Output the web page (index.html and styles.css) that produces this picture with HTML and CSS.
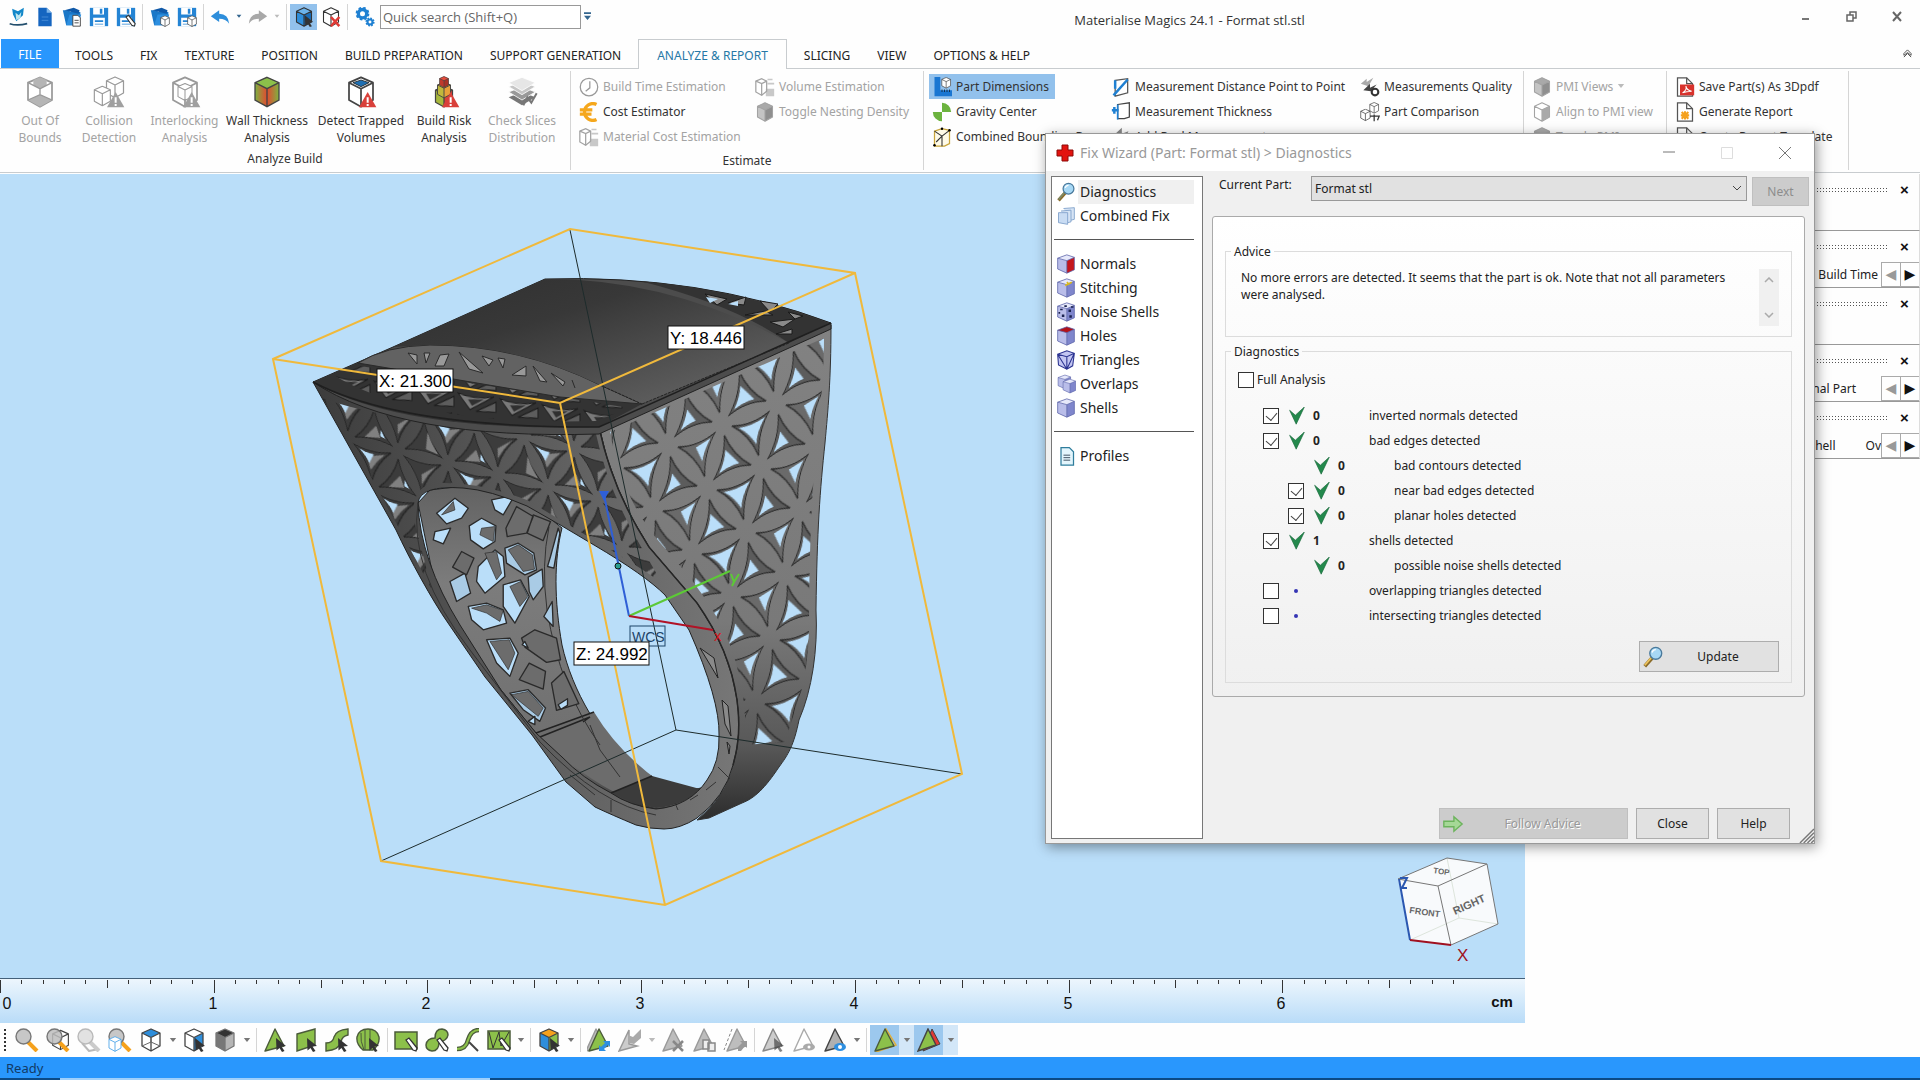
FILE: index.html
```html
<!DOCTYPE html>
<html lang="en">
<head>
    <meta charset="UTF-8">
    <meta name="viewport" content="width=device-width, initial-scale=1.0">
    <title>Materialise Magics 24.1 - Format stl.stl</title>
    <link rel="stylesheet" href="styles.css">
</head>
<body>
    <!-- shared icons -->
    <svg class="defs" width="0" height="0">
        <symbol id="cube" viewBox="0 0 24 24"><path d="M12 1 21 5v13l-9 5-9-5V5z" fill="var(--l,#fff)"/><path d="M12 9.500 21 5v13l-9 5z" fill="var(--r,#fff)"/><path d="M3 5l9-4 9 4-9 4.500z" fill="var(--t,#fff)"/><path d="M12 1 21 5v13l-9 5-9-5V5zM3 5l9 4.500L21 5M12 9.500V23" fill="none" stroke="currentColor" stroke-width="1.300" stroke-linejoin="round"/></symbol>
        <symbol id="cursor" viewBox="0 0 24 24"><path d="M13 10l10 8-4.500.5 3 4.500-2.500 1-2.500-4-3 2.500z" fill="#333"/></symbol>
        <symbol id="warn" viewBox="0 0 24 24"><path d="M17 12l6.500 11.500h-13z" fill="var(--w,#d9403a)"/><path d="M17 16v4M17 21v1.500" stroke="#fff" stroke-width="1.500"/></symbol>
        <symbol id="save" viewBox="0 0 24 24"><path d="M1 1h22v22H1z" fill="#2484d4"/><path d="M5 1h13v8H5zM5 13h14v10H5z" fill="#fff"/><path d="M13 2h3v6h-3zM7 16h10v2H7zM7 20h10v1H7z" fill="#2484d4"/></symbol>
        <symbol id="folder" viewBox="0 0 24 24"><path d="M1 4h7l2 2h12v4l-4 12H5z" fill="#1b78c8"/><path d="M3 4L14 1l7 3-1 4z" fill="#1059a8"/><path d="M5 22L9 9h14l-3 13z" fill="#2d8fe0"/></symbol>
        <symbol id="pen" viewBox="0 0 24 24"><path d="M12 12l3-2 8 10-1 3-3-1z" fill="#fff" stroke="#333" stroke-width="1.300"/></symbol>
        <symbol id="lens" viewBox="0 0 24 24"><path d="M13 14l9 9" stroke="var(--h,#f5a11c)" stroke-width="4" /><circle cx="8.500" cy="8.500" r="7.500" fill="#bdbdbd" fill-opacity=".85" stroke="#777" stroke-width="1.400"/></symbol>
        <symbol id="glass" viewBox="0 0 24 24"><path d="M11 13L3 22" stroke="#8a6a28" stroke-width="4"/><path d="M10 13L3 21" stroke="var(--h,#edc35c)" stroke-width="2"/><circle cx="15" cy="8" r="6.500" fill="#a7d8f5" stroke="#4a7a9c" stroke-width="1.500"/><path d="M11 7q1-3 4-3" stroke="#fff" stroke-width="1.500" fill="none"/></symbol>
        <symbol id="tri" viewBox="0 0 24 24"><path d="M12 1l9 17-19 5z" fill="var(--f,#8cc04a)" stroke="var(--s,#4b5b3a)" stroke-width="1.400" stroke-linejoin="round"/></symbol>
        <symbol id="blocks" viewBox="0 0 24 24"><path d="M1 5l7-3 6 3v12l-6 5-7-4z" fill="#fff" stroke="currentColor" stroke-width="1.500"/><path d="M1 5l7 3 6-3M8 8v14" fill="none" stroke="currentColor" stroke-width="1.500"/><path d="M15 2h6v2h-6zM15 7h8v2h-8zM13 14h10v9H13z" fill="currentColor" opacity=".6"/></symbol>
        <symbol id="page" viewBox="0 0 24 24"><path d="M3 1h11l7 7v15H3z" fill="#fff" stroke="#555" stroke-width="1.500"/><path d="M14 1v7h7" fill="none" stroke="#555" stroke-width="1.500"/></symbol>
        <symbol id="mesh-cube" viewBox="0 0 24 24"><path d="M2 5l11-4 9 3v15l-9 4-11-5z" fill="#cfd2f2"/><path d="M2 5l11 3v15L2 18z" fill="var(--l,#b9bde9)"/><path d="M13 8l9-4v15l-9 4z" fill="var(--r,#7f86cc)"/><path d="M2 5l11-4 9 3-9 4z" fill="var(--t,#e6e8fa)"/><path d="M2 5l11-4 9 3v15l-9 4-11-5zM2 5l11 3 9-4M13 8v15" fill="none" stroke="#5a62a6" stroke-width=".9"/></symbol>
        <symbol id="tick" viewBox="0 0 20 22"><path d="M1 4l7 6L19 0 9 21z" fill="#23894c" stroke="#17693a" stroke-width=".8"/></symbol>
        <symbol id="down" viewBox="0 0 10 6"><path d="M1 0h8L5 5z" fill="currentColor"/></symbol>
    </svg>

    <header id="titlebar">
        <div class="quick">
            <button aria-label="Magics"><svg viewBox="0 0 24 24"><path d="M5 2l7 3 7-4-1 9-8 7-4-8z" fill="#1287c9"/><path d="M9 7l4 3 3-4-1 7-5 3z" fill="#bfe6ee"/><path d="M2 20q9 3 21 0" stroke="#24506e" stroke-width="2" fill="none"/></svg></button>
            <button aria-label="New"><svg viewBox="0 0 24 24"><path d="M4 1h10l6 6v16H4z" fill="#1565c0"/><path d="M14 1v6h6z" fill="#7db5ea"/><path d="M8 12h8M8 16h8" stroke="#4b8fd8"/></svg></button>
            <button aria-label="Open"><svg viewBox="0 0 24 24"><use href="#folder"/><path d="M13 10h6l3 3v10h-9z" fill="#fff" stroke="#333"/><path d="M15 16h5M15 19h5" stroke="#333"/></svg></button>
            <button aria-label="Save"><svg><use href="#save"/></svg></button>
            <button aria-label="Save as"><svg viewBox="0 0 24 24"><use href="#save"/><use href="#pen"/></svg></button>
            <i class="sep"></i>
            <button aria-label="Import part"><svg viewBox="0 0 24 24"><use href="#folder"/><use href="#cube" x="11" y="10" width="14" height="14"/></svg></button>
            <button aria-label="Save part"><svg viewBox="0 0 24 24"><use href="#save"/><use href="#cube" x="11" y="10" width="14" height="14"/></svg></button>
            <i class="sep"></i>
            <button class="wide" aria-label="Undo"><svg viewBox="0 0 24 24"><path d="M1 11l10-7v4q11 0 12 12-4-6-12-6v4z" fill="#2e8edb"/></svg><svg class="caret blue"><use href="#down"/></svg></button>
            <button class="wide" aria-label="Redo"><svg viewBox="0 0 24 24"><path d="M23 11L13 4v4Q2 8 1 20q4-6 12-6v4z" fill="#a8a8a8"/></svg><svg class="caret light"><use href="#down"/></svg></button>
            <i class="sep"></i>
            <button class="on" aria-label="Select part"><svg class="c-blue" viewBox="0 0 24 24"><use href="#cube"/><use href="#cursor"/></svg></button>
            <button aria-label="Unload part"><svg viewBox="0 0 24 24"><use href="#cube"/><path d="M12 12l10 11M22 12L12 23" stroke="#e03a35" stroke-width="3"/></svg></button>
            <i class="sep"></i>
            <button aria-label="Settings"><svg viewBox="0 0 24 24"><circle cx="9" cy="8" r="5" fill="none" stroke="#1f80d2" stroke-width="4"/><circle cx="9" cy="8" r="7" fill="none" stroke="#1f80d2" stroke-width="2.500" stroke-dasharray="3 2.500"/><circle cx="18" cy="18" r="3" fill="none" stroke="#1f80d2" stroke-width="2.500"/><circle cx="18" cy="18" r="4.500" fill="none" stroke="#1f80d2" stroke-width="2" stroke-dasharray="2 1.500"/></svg></button>
            <input type="text" aria-label="Quick search" placeholder="Quick search (Shift+Q)">
            <svg class="overflow" viewBox="0 0 8 10"><path d="M0 0h8v2H0zM0 4h8L4 9z" fill="#33658e"/></svg>
        </div>
        <h1>Materialise Magics 24.1 - Format stl.stl</h1>
        <div class="window-buttons">
            <button aria-label="Minimize"><svg viewBox="0 0 14 14"><path d="M4 8h7v2H4z" fill="#777"/></svg></button>
            <button aria-label="Restore"><svg viewBox="0 0 14 14"><path d="M6 5V2h6v6H9M3 5h6v6H3z" fill="none" stroke="#666" stroke-width="1.500"/></svg></button>
            <button aria-label="Close"><svg viewBox="0 0 14 14"><path d="M3 2l8 9M11 2l-8 9" stroke="#666" stroke-width="2"/></svg></button>
        </div>
    </header>

    <nav id="tabs">
        <a href="#" class="file">FILE</a>
        <a href="#">TOOLS</a>
        <a href="#">FIX</a>
        <a href="#">TEXTURE</a>
        <a href="#">POSITION</a>
        <a href="#">BUILD PREPARATION</a>
        <a href="#">SUPPORT GENERATION</a>
        <a href="#" class="active">ANALYZE &amp; REPORT</a>
        <a href="#">SLICING</a>
        <a href="#">VIEW</a>
        <a href="#">OPTIONS &amp; HELP</a>
        <button aria-label="Collapse ribbon"><svg viewBox="0 0 10 10"><path d="M1 5l4-4 4 4v2L5 4 1 7zM1 9l4-4 4 4" fill="none" stroke="#444"/></svg></button>
    </nav>

    <div id="ribbon">
        <section class="group analyze">
            <div class="big-buttons">
                <button disabled><svg class="c-gray" viewBox="0 0 24 24"><path d="M3 5l9-4 9 4v13l-9 5-9-5z" fill="#fff" stroke="#999" stroke-width="1.300"/><path d="M7 3l5-2 5 2v4l-5 2-5-2zM3 18l9-4 9 4-9 5z" fill="#b5b5b5"/><path d="M3 5l9 4.500L21 5M12 9.500V14M3 18l9-4 9 4" fill="none" stroke="#999"/></svg>Out Of<br>Bounds</button>
                <button disabled><svg viewBox="0 0 24 24"><use href="#cube" x="8" y="0" width="17" height="17"/><use href="#cube" x="-1" y="7" width="16" height="16"/><use href="#warn" class="c-gray"/></svg>Collision<br>Detection</button>
                <button disabled><svg viewBox="0 0 24 24"><use href="#cube"/><use href="#cube" x="5" y="5" width="14" height="14"/><use href="#warn" class="c-gray"/></svg>Interlocking<br>Analysis</button>
                <button><svg viewBox="0 0 24 24"><defs><linearGradient id="heat"><stop offset="0" stop-color="#7db340"/><stop offset=".5" stop-color="#e24a30"/><stop offset="1" stop-color="#7db340"/></linearGradient></defs><path d="M12 1l9 4v13l-9 5-9-5V5z" fill="url(#heat)"/><path d="M3 5l9-4 9 4-9 4.500z" fill="#8cc04a"/><path d="M12 1 21 5v13l-9 5-9-5V5zM3 5l9 4.500L21 5M12 9.500V23" fill="none" stroke="#444"/></svg>Wall Thickness<br>Analysis</button>
                <button><svg viewBox="0 0 24 24"><use href="#cube"/><path d="M6 5l6-2 6 2-6 3z" fill="#1f6fb2" stroke="#222" stroke-width=".6"/><use href="#warn"/></svg>Detect Trapped<br>Volumes</button>
                <button><svg viewBox="0 0 24 24"><use href="#cube" class="c-risk" x="0" y="7" width="24" height="17"/><use href="#cube" class="c-gold" x="4" y="4" width="16" height="13"/><use href="#cube" class="c-red" x="6" y="0" width="12" height="9"/><use href="#warn"/></svg>Build Risk<br>Analysis</button>
                <button disabled><svg viewBox="0 0 24 24"><path d="M2 16l10-4 10 4-10 6z" fill="#777"/><path d="M2 12l10-4 10 4-10 6z" fill="#999" stroke="#fff" stroke-width=".6"/><path d="M2 8l10-4 10 4-10 6z" fill="#c6c6c6" stroke="#fff" stroke-width=".6"/><path d="M2 5l10-4 10 4-10 6z" fill="#e6e6e6" stroke="#fff" stroke-width=".6"/><path d="M13 22l3-6 3 4 4-7" stroke="#777" fill="none" stroke-width="1.500"/></svg>Check Slices<br>Distribution</button>
            </div>
            <h2>Analyze Build</h2>
        </section>
        <section class="group estimate">
            <div class="small-buttons">
                <button disabled><svg viewBox="0 0 24 24"><circle cx="12" cy="12" r="10.500" fill="#fff" stroke="#999" stroke-width="1.500"/><path d="M13 5v8l-5 4" fill="none" stroke="#999" stroke-width="1.500"/></svg>Build Time Estimation</button>
                <button><svg viewBox="0 0 24 24"><path d="M21 3A10 10 0 1 0 21 21M1 9.500h15M1 14.500h14" fill="none" stroke="#f5a71c" stroke-width="4"/></svg>Cost Estimator</button>
                <button disabled><svg><use href="#blocks"/></svg>Material Cost Estimation</button>
                <button disabled><svg><use href="#blocks"/></svg>Volume Estimation</button>
                <button disabled><svg class="c-gray"><use href="#cube"/></svg>Toggle Nesting Density</button>
            </div>
            <h2>Estimate</h2>
        </section>
        <section class="group measure">
            <div class="small-buttons">
                <button class="on"><svg viewBox="0 0 24 24"><path d="M3 0h7v16h14v7H3z" fill="#1976d2"/><path d="M12 15v3M15 15v3M18 15v3M21 15v3" stroke="#123"/><use href="#cube" x="10" y="0" width="14" height="14"/></svg>Part Dimensions</button>
                <button><svg viewBox="0 0 24 24"><path d="M12 1a11 11 0 0 1 11 11H12zM12 23A11 11 0 0 1 1 12h11z" fill="#6cb33f"/></svg>Gravity Center</button>
                <button><svg viewBox="0 0 24 24"><path d="M3 5l9-3 9 2v16l-6 3H3z" fill="#fffbe8" stroke="#c8a43a" stroke-width="1.500"/><path d="M3 5l9 6 9-7M12 11v12M5 18l7-7" stroke="#333" fill="none" stroke-width="1.300"/><circle cx="12" cy="2" r="1.500"/><circle cx="3" cy="22" r="1.500"/><circle cx="21" cy="4" r="1.500"/></svg>Combined Bounding Box</button>
                <button><svg viewBox="0 0 24 24"><path d="M5 4l15-2v17l-15 4z" fill="#fff" stroke="#555" stroke-width="1.500"/><path d="M3 22L20 3M5 4v10" stroke="#1f80d2" stroke-width="3"/></svg>Measurement Distance Point to Point</button>
                <button><svg viewBox="0 0 24 24"><path d="M8 3l14-2v17l-6 2H8z" fill="#fff" stroke="#444" stroke-width="1.500"/><path d="M4 6v8M1 10h8" stroke="#1f80d2" stroke-width="3"/><path d="M8 3v18" stroke="#1f80d2" stroke-width="2"/></svg>Measurement Thickness</button>
                <button><svg viewBox="0 0 24 24"><path d="M2 11L13 1v7l8-3-9 17z" fill="#888"/></svg>Add Real Measurement</button>
                <button><svg viewBox="0 0 24 24"><path d="M1 8l7-6v4l8-5-6 10z" fill="#aaa"/><path d="M4 16l8-8v5l8-4-7 8z" fill="#444"/><circle cx="18" cy="18" r="4" fill="#fff" stroke="#333" stroke-width="2.500"/></svg>Measurements Quality</button>
                <button><svg viewBox="0 0 24 24"><use href="#cube" x="10" y="0" width="14" height="14"/><use href="#cube" x="-1" y="8" width="15" height="15"/><path d="M17 15v8M12 17h11l-2 5" stroke="#333" stroke-width="1.500" fill="none"/></svg>Part Comparison</button>
            </div>
        </section>
        <section class="group pmi">
            <div class="small-buttons">
                <button disabled><svg class="c-gray"><use href="#cube"/></svg>PMI Views <svg class="caret light"><use href="#down"/></svg></button>
                <button disabled><svg viewBox="0 0 24 24"><use href="#cube"/><path d="M12 9v14l9-5V5z" fill="#aaa"/></svg>Align to PMI view</button>
                <button disabled><svg class="c-gray"><use href="#cube"/></svg>Toggle PMI</button>
            </div>
        </section>
        <section class="group report">
            <div class="small-buttons">
                <button><svg viewBox="0 0 24 24"><use href="#page"/><path d="M6 9h17v13H6z" fill="#d8322c"/><path d="M9 19q6-4 4-8 1 5 7 6-6 0-11 2" fill="none" stroke="#fff" stroke-width="1.300"/></svg>Save Part(s) As 3Dpdf</button>
                <button><svg viewBox="0 0 24 24"><use href="#page"/><path d="M12 11v10M7 16h10M8 12l8 8M16 12l-8 8" stroke="#f5a11c" stroke-width="2.500"/></svg>Generate Report</button>
                <button><svg><use href="#page"/></svg>Create Report Template</button>
            </div>
        </section>
    </div>

    <main id="workspace">
        <div id="viewport">
            <svg id="scene" viewBox="0 174 1525 804" preserveAspectRatio="xMinYMin slice">
                <defs>
                    <linearGradient id="top-shade" x1="0" y1="0" x2="1" y2="1"><stop offset="0" stop-color="#2f2f2f"/><stop offset=".35" stop-color="#383838"/><stop offset="1" stop-color="#6a6a6a"/></linearGradient>
                    <linearGradient id="front-shade"><stop offset="0" stop-color="#3c3c3c"/><stop offset=".4" stop-color="#555"/><stop offset="1" stop-color="#777"/></linearGradient>
                    <linearGradient id="side-shade" x1="0" y1="0" x2="0" y2="1"><stop offset="0" stop-color="#828282"/><stop offset=".6" stop-color="#797979"/><stop offset=".85" stop-color="#585858"/><stop offset="1" stop-color="#2c2c2c"/></linearGradient>
                    <linearGradient id="inner-shade" x1="0" y1="0" x2="0" y2="1"><stop offset="0" stop-color="#626262"/><stop offset=".3" stop-color="#7c7c7c"/><stop offset=".85" stop-color="#6e6e6e"/><stop offset="1" stop-color="#303030"/></linearGradient>
                    <!-- one tile holds four curved holes between six-petal flowers -->
                    <pattern id="petals" width="200" height="100" patternUnits="userSpaceOnUse" patternTransform="matrix(.54 -.21 -.15 .64 707 488)">
                        <g stroke="#2b2b2b" stroke-width="1.800" fill="#5c5c5c">
                            <path d="M21 10Q61 23 90 10 77 39 90 79 61 37 21 10z"/>
                            <path d="M10 21Q23 61 10 90 39 77 79 90 37 61 10 21z"/>
                            <path d="M121 10Q161 23 190 10 177 39 190 79 161 37 121 10z" fill="#6a6a6a"/>
                            <path d="M110 21Q123 61 110 90 139 77 179 90 137 61 110 21z"/>
                        </g>
                        <g fill="#badef9">
                            <path d="M36 18Q62 24 84 17 74 38 80 58 60 34 36 18z"/>
                            <path d="M19 47Q24 64 18 83 36 76 54 79 34 60 19 47z"/>
                            <path d="M158 23l25-6q-8 20-5 34z"/>
                            <path d="M122 52q2 14-3 31 16-7 26-6z"/>
                        </g>
                    </pattern>
                    <pattern id="front-petals" width="200" height="100" patternUnits="userSpaceOnUse" patternTransform="matrix(-.5 -.12 .24 .5 448 463)">
                        <g stroke="#222" stroke-width="1.800" fill="#3c3c3c">
                            <path d="M18 8Q61 21 92 8 79 39 92 82 61 38 18 8z"/>
                            <path d="M8 18Q21 61 8 92 39 79 82 92 38 61 8 18z"/>
                            <path d="M118 8Q161 21 192 8 179 39 192 82 161 38 118 8z"/>
                            <path d="M108 18Q121 61 108 92 139 79 182 92 138 61 108 18z"/>
                        </g>
                        <path d="M30 14l42 26 10 22-24-24zM13 42q4 28 0 44l22-5zM134 16l42 13 6 28-24-22zM122 55l4 25 34 6z" fill="#808080"/>
                        <path d="M158 20q14 2 26-5-8 18-6 28zM116 62l0 18 8-4z" fill="#badef9"/>
                    </pattern>
                    <pattern id="slots" width="42" height="22" patternUnits="userSpaceOnUse" patternTransform="matrix(1 .14 0 1 330 372)">
                        <path d="M2 3Q20 8 38 2L14 18z" fill="#7a7a7a" stroke="#1c1c1c"/><path d="M12 8l16-2-12 8z" fill="#303030"/><path d="M20 19l20-12v10z" fill="#5d5d5d" stroke="#1c1c1c"/>
                    </pattern>
                </defs>

                <!-- ring: inside wall -->
                <path d="M418 503L430 490 463 486 527 500 562 528C554 560 554 600 562 645 572 690 600 740 640 772 665 788 690 792 705 787L690 805 656 812 600 795 536 733 501 690 438 600z" fill="url(#inner-shade)" stroke="#222"/>
                <path d="M536 733L594 712Q618 752 660 782L700 789Q688 806 656 808 600 795 536 733z" fill="#6c6c6c"/>
                <path d="M656 808Q630 803 611 793L652 776 700 789Q684 806 656 808z" fill="#3b3b3b"/>
                <path d="M536 733L594 712M540 737L590 717 583 722M611 793L652 776" fill="none" stroke="#222" stroke-width="1.500"/>
                <path d="M590 725l10 25 20 27M549 527Q541 565 547 610 560 690 600 745" fill="none" stroke="#333"/>
                <g transform="translate(400 400) scale(.333)" fill="#badef9" stroke="#2a2a2a" stroke-width="4" stroke-linejoin="round">
                    <path d="M110 340L165 295 205 325 185 355 140 372zM208 378L245 355 288 378 285 425 250 447 212 420zM275 300L345 285 310 345 285 330zM105 395L152 385 130 432 100 420zM235 500L285 450 310 470 315 530 255 580 230 545zM310 555L362 540 388 590 345 670 310 620zM205 620L260 610 310 630 320 670 250 690 215 660zM260 720L330 715 355 760 330 830 290 790z"/>
                    <path d="M315 445L355 430 402 460 410 510 375 525 320 490zM385 532L427 508 430 560 400 600 388 575zM330 880L385 870 437 925 420 965 370 930zM452 470L475 385 480 400 462 505 443 500zM150 545L195 520 212 580 170 605zM432 650L457 605 460 680z" fill="#a9cbe5"/>
                    <g fill="#6c6c6c">
                        <path d="M318 385L350 320 400 350 380 400 322 410zM400 345L452 365 430 422 382 400zM185 455L222 475 200 525 158 502zM365 715L405 690 470 715 482 780 440 788 375 742zM388 790L437 815 430 868 358 840zM455 850L492 815 537 912 470 932z"/>
                        <path d="M325 450L355 435 398 465 404 508 370 515zM245 385L285 380 280 425 240 405zM255 460L290 455 305 520 290 540zM330 560L362 545 384 590 360 620zM215 625L260 615 310 632 300 665 260 640zM270 725L328 720 345 760 325 810zM125 345L160 305 165 330zM335 885L385 875 430 925 415 950z" stroke-width="2"/>
                    </g>
                    <path d="M475 915l28-18 0 20-20 12zM385 965l20-15 0 25zM375 725l10 20-18-10z"/>
                </g>

                <!-- ring: right side -->
                <path id="side" d="M599 427L831 325C831 380 828 410 825 443 820 490 817 530 816 610 818 650 812 690 799 720 794 745 788 755 779 767 765 788 755 798 742 803L709 818 697 820Q725 797 733 765 742 735 737 700 730 650 697 603L649 547Q612 490 599 427z" fill="url(#side-shade)" stroke="#333"/>
                <path d="M610 432L824 338C824 380 820 410 817 443 812 490 810 530 809 610 810 650 805 690 792 720L785 742 745 745Q748 690 728 640 712 600 662 545 622 500 610 432z" fill="url(#petals)"/>

                <!-- ring: front band -->
                <path d="M313 382Q380 425 599 427 612 490 649 547L697 603Q730 650 737 700 742 735 733 765 725 797 697 818 680 829 664 829 650 829 636 825 612 815 595 807L566 782 532 735 485 677 448 623C432 600 410 560 396 530L355 457zM418 503Q420 560 460 625L501 690 536 733 562 757Q582 778 611 793 630 806 656 809 690 806 707 780 720 762 719 735 720 700 689 630L665 595Q645 575 594 545L562 526 527 506Q490 490 463 488 420 485 418 503z" fill="url(#front-shade)" fill-rule="evenodd" stroke="#222"/>
                <path d="M322 398Q400 427 596 434 608 490 640 545L662 583Q640 567 594 540L527 500Q480 482 440 483 410 483 414 520L432 590 400 530 360 457z" fill="url(#front-petals)"/>
                <path d="M599 427Q612 490 649 547L697 603Q730 650 737 700 742 735 733 765" fill="none" stroke="#262626" stroke-width="1.500"/>
                <path d="M418 503Q408 570 470 650L540 742Q600 805 656 815" fill="none" stroke="#333"/>
                <g fill="#8a8a8a" stroke="#222">
                    <path d="M700 648l14 10 4 20zM722 700l6 6 3 30-6-12zM727 742l3 4-1 8z"/>
                </g>
                <path d="M611 800v12M675 803l3 7M718 767l12 12M570 775l25 20M690 800l8-5M706 790l10-8" stroke="#333"/>

                <!-- ring: top -->
                <path d="M313 382L393 347 545 279Q700 274 831 323V329L599 434Q400 440 313 382z" fill="#4c4c4c" stroke="#222"/>
                <path d="M313 382L360 362 642 404 599 427Q400 432 313 382z" fill="#333"/>
                <path d="M335 376L360 366 630 408 596 421Q420 426 335 376z" fill="url(#slots)"/>
                <path d="M358 363Q385 346 430 345 520 345 600 385L642 404 560 397z" fill="#626262" stroke="#2a2a2a"/>
                <path d="M408 353l9 11v-9zM424 353l6 0-4 10zM440 355l9-1-5 12-9 0zM459 352l10 17 14 4zM482 356l7 10 4-6zM498 358l5 10 2-9zM512 375l14-9 0 10zM533 366l7 15 7 1zM551 373l12 13 2-4zM572 380l3 8" fill="#999" stroke="#2a2a2a"/>
                <path d="M393 347L545 279Q670 278 789 343L642 404 600 385Q520 345 430 345z" fill="url(#top-shade)"/>
                <path d="M640 281Q740 290 829 323L789 343Q735 305 640 281z" fill="#333"/>
                <path d="M705 294l22 5-10 6zM728 303l18-6-2 8zM745 315l20-4 8 4zM760 301l18 3-8 8zM770 322l25-3-12 8zM788 312l15 4-8 3zM776 334l16 0 0-5z" fill="#8a8a8a" stroke="#1b1b1b"/>
                <path d="M706 297l12 2-8 4zM728 304l10-3 0 5z" fill="#badef9"/>
                <path d="M313 382Q400 428 599 427L831 323" fill="none" stroke="#1f1f1f" stroke-width="1.500"/>
                <path d="M600 385l42 19M642 404l147-61" stroke="#222" stroke-dasharray="3 1"/>

                <!-- bounding box -->
                <path d="M570 230L676 730 381 861M676 730L962 774" fill="none" stroke="#1d2b2b"/>
                <path d="M273 359L570 229 855 273 962 774 665 905 381 861zM273 359L560 403 855 273M560 403L665 905" fill="none" stroke="#f0b93c" stroke-width="2"/>
                <path d="M604 495L629 616" stroke="#2f5fd6" stroke-width="2"/><path d="M599 491h10l-5 10z" fill="#2f5fd6"/>
                <circle cx="618" cy="566" r="3" fill="#2a9d8f" stroke="#111"/>
                <path d="M629 616L730 571M731 574l3 8 5-8M734 582l-2 4" fill="none" stroke="#5cc936" stroke-width="2"/>
                <path d="M629 616L713 630" stroke="#b11226" stroke-width="2"/>
                <text x="714" y="641" class="axis">x</text>
                <text x="632" y="642" class="wcs">WCS</text><rect x="630" y="626" width="35" height="20" fill="none" stroke="#1d4468"/>
                <g class="dims">
                    <rect x="377" y="369" width="76" height="23"/><text x="379" y="387">X: 21.300</text>
                    <rect x="668" y="326" width="76" height="23"/><text x="670" y="344">Y: 18.446</text>
                    <rect x="574" y="642" width="75" height="23"/><text x="576" y="660">Z: 24.992</text>
                </g>

                <!-- view cube -->
                <path d="M1398 879L1447 858 1487 864 1498 924 1451 945 1410 940z" fill="#f8fafc"/>
                <path d="M1410 940L1459 918 1498 924M1459 918L1447 858" fill="none" stroke="#dde5dc"/>
                <path d="M1398 879L1447 858 1487 864 1498 924 1451 945M1398 879L1438 886 1487 864M1438 886L1451 945" fill="none" stroke="#777"/>
                <path d="M1399 879L1410 940M1400 878h7l-5 10h5" fill="none" stroke="#2b57b0" stroke-width="2"/>
                <path d="M1410 940L1451 945" stroke="#a01020" stroke-width="2"/>
                <text x="1409" y="913" class="face" transform="rotate(8 1409 913)">FRONT</text>
                <text x="1455" y="915" class="face big" transform="rotate(-24 1455 915)">RIGHT</text>
                <text x="1433" y="873" class="face top" transform="rotate(8 1433 873)">TOP</text>
                <text x="1457" y="961" class="axis-x">X</text>
            </svg>
            <svg id="ruler" height="45"></svg>
        </div>
        <aside id="panes">
            <section><header><i></i><button aria-label="Close pane">×</button></header></section>
            <section><header><i></i><button aria-label="Close pane">×</button></header>
                <div class="pane-tabs"><span>Build Time</span><button aria-label="Previous tab">◀</button><button aria-label="Next tab">▶</button></div></section>
            <section><header><i></i><button aria-label="Close pane">×</button></header></section>
            <section><header><i></i><button aria-label="Close pane">×</button></header>
                <div class="pane-tabs"><span class="short">Original Part</span><button aria-label="Previous tab">◀</button><button aria-label="Next tab">▶</button></div></section>
            <section><header><i></i><button aria-label="Close pane">×</button></header>
                <div class="pane-tabs"><span class="cut">Shell</span><span class="cut-next">Ov</span><button aria-label="Previous tab">◀</button><button aria-label="Next tab">▶</button></div></section>
        </aside>
    </main>

    <div id="toolbar">
        <i class="grip"></i>
        <button aria-label="Zoom"><svg><use href="#lens"/></svg></button>
        <button aria-label="Zoom part"><svg viewBox="0 0 24 24"><use href="#cube" x="4" y="0" width="21" height="24"/><use href="#lens"/></svg></button>
        <button aria-label="Unzoom"><svg class="faded" viewBox="0 0 24 24"><path d="M5 15l7 8 10-2" fill="none" stroke="#777" stroke-width="2"/><use href="#lens"/></svg></button>
        <button aria-label="Zoom all"><svg viewBox="0 0 24 24"><use href="#lens"/><use href="#cube" class="c-line" x="-1" y="8" width="16" height="16"/></svg></button>
        <button aria-label="Views"><svg class="c-top" viewBox="0 0 24 24"><use href="#cube"/><path d="M12 9v5L3 18M12 14l9 4" fill="none" stroke="#666"/></svg></button>
        <svg class="caret"><use href="#down"/></svg>
        <button aria-label="Select side"><svg class="c-right" viewBox="0 0 24 24"><use href="#cube"/><use href="#cursor"/></svg></button>
        <button aria-label="Shading"><svg class="c-dark"><use href="#cube"/></svg></button>
        <svg class="caret"><use href="#down"/></svg>
        <i class="sep"></i>
        <button aria-label="Mark triangle"><svg viewBox="0 0 24 24"><use href="#tri"/><use href="#cursor"/></svg></button>
        <button aria-label="Mark plane"><svg viewBox="0 0 24 24"><path d="M3 6l18-5v16L3 23z" fill="#8cc04a" stroke="#4b5b3a" stroke-width="1.400"/><use href="#cursor"/></svg></button>
        <button aria-label="Mark surface"><svg viewBox="0 0 24 24"><path d="M1 23V15q7 0 8-6 2-7 14-8v6q-6 1-7 7-2 8-15 9z" fill="#8cc04a" stroke="#4b5b3a" stroke-width="1.400"/><use href="#cursor"/></svg></button>
        <button aria-label="Mark shell"><svg viewBox="0 0 24 24"><path d="M7 22Q0 16 1 9 3 1 12 1t11 8q1 7-6 13z" fill="#8cc04a" stroke="#4b5b3a" stroke-width="1.400"/><path d="M9 2v20M14 1v21M5 5q-1 8 3 17" fill="none" stroke="#4b5b3a"/><use href="#cursor"/></svg></button>
        <i class="sep"></i>
        <button aria-label="Rectangle marking"><svg viewBox="0 0 24 24"><path d="M1 4h22v17H1z" fill="#8cc04a" stroke="#4b5b3a" stroke-width="1.500"/><use href="#pen"/></svg></button>
        <button aria-label="Free form marking"><svg viewBox="0 0 24 24"><path d="M10 10q0-9 7-9 6 1 6 6-1 6-9 7 0 9-7 9-6-1-6-6 1-7 9-7z" fill="#8cc04a" stroke="#4b5b3a" stroke-width="1.500"/><use href="#pen"/></svg></button>
        <button aria-label="Brush marking"><svg viewBox="0 0 24 24"><path d="M1 21q9 0 11-9 3-10 11-10" fill="none" stroke="#4b5b3a" stroke-width="4.500"/><path d="M1 21q9 0 11-9 3-10 11-10" fill="none" stroke="#8cc04a" stroke-width="2"/><path d="M13 14l9 9" stroke="#444" stroke-width="2"/></svg></button>
        <button aria-label="Window marking"><svg viewBox="0 0 24 24"><path d="M1 3h22v18H1z" fill="#8cc04a" stroke="#4b5b3a" stroke-width="1.500"/><path d="M2 4l4 16 6-16 2 14 8-14" fill="none" stroke="#333"/><use href="#pen"/></svg></button>
        <svg class="caret"><use href="#down"/></svg>
        <i class="sep"></i>
        <button aria-label="Colour cube"><svg class="c-multi" viewBox="0 0 24 24"><use href="#cube"/><use href="#cursor"/></svg></button>
        <svg class="caret"><use href="#down"/></svg>
        <i class="sep"></i>
        <button aria-label="Invert marking"><svg viewBox="0 0 24 24"><use href="#tri" class="t-gray" x="-3"/><use href="#tri"/><path d="M12 23v-6l2 2 4-4-2-2h7v6l-2-2-4 4 2 2z" fill="#2f8fe0"/></svg></button>
        <button disabled aria-label="Connect"><svg viewBox="0 0 24 24"><path d="M1 23L11 2v14l8 2z" fill="#ccc" stroke="#999" stroke-width="1.500"/><path d="M10 7l5 2 8-8v9l-7 6-6-1z" fill="#aaa"/></svg></button>
        <svg class="caret light"><use href="#down"/></svg>
        <button disabled aria-label="Delete marked"><svg viewBox="0 0 24 24"><use href="#tri" class="t-gray"/><path d="M12 13l10 10M22 13L12 23" stroke="#888" stroke-width="2.500"/></svg></button>
        <button disabled aria-label="Copy marked"><svg viewBox="0 0 24 24"><use href="#tri" class="t-gray"/><path d="M11 12h6v9h-6zM16 15h7v8h-7z" fill="#eee" stroke="#888" stroke-width="1.500"/></svg></button>
        <button disabled aria-label="Separate marked"><svg viewBox="0 0 24 24"><use href="#tri" class="t-gray" x="2"/><path d="M9 1L1 22" stroke="#888" stroke-dasharray="3 2"/><path d="M15 23v-4l4-4-2-2h7v7l-2-2-4 5z" fill="#999"/></svg></button>
        <i class="sep"></i>
        <button disabled aria-label="Hide marked"><svg viewBox="0 0 24 24"><use href="#tri" class="t-light"/><use href="#cursor" opacity=".6"/></svg></button>
        <button disabled aria-label="Show hidden"><svg viewBox="0 0 24 24"><use href="#tri" class="t-white"/><ellipse cx="17" cy="19" rx="6" ry="3.500" fill="#aaa"/><circle cx="17" cy="19" r="1.500" fill="#fff"/></svg></button>
        <button aria-label="View triangles"><svg viewBox="0 0 24 24"><use href="#tri" class="t-dark"/><ellipse cx="17" cy="19" rx="6" ry="4" fill="#2f8fe0"/><circle cx="17" cy="19" r="2" fill="#fff"/></svg></button>
        <svg class="caret"><use href="#down"/></svg>
        <i class="sep"></i>
        <button class="on" aria-label="Mark flat"><svg viewBox="0 0 24 24"><path d="M13 1l10 16-20 7z" fill="none" stroke="#e0b040" stroke-width="1.500"/><use href="#tri"/></svg></button>
        <span class="drop"><svg class="caret"><use href="#down"/></svg></span>
        <button class="on" aria-label="Mark double"><svg viewBox="0 0 24 24"><path d="M15 1l8 15-17 7z" fill="#e03a35" stroke="#444"/><path d="M11 1l8 16-18 6z" fill="#8cc04a" stroke="#444" stroke-width="1.500"/></svg></button>
        <span class="drop"><svg class="caret"><use href="#down"/></svg></span>
    </div>

    <footer id="status">Ready</footer>

    <div id="wizard" role="dialog" aria-labelledby="wizard-title">
        <header>
            <svg viewBox="0 0 18 18"><path d="M6 1h6v5h5v6h-5v5H6v-5H1V6h5z" fill="#e3130f" stroke="#8d0b08"/></svg>
            <h2 id="wizard-title">Fix Wizard (Part: Format stl) &gt; Diagnostics</h2>
            <button aria-label="Minimize"><svg viewBox="0 0 14 14"><path d="M1 6h12" stroke="#777"/></svg></button>
            <button aria-label="Maximize" disabled><svg viewBox="0 0 14 14"><path d="M1.500 1.500h11v11h-11z" fill="none" stroke="#ddd"/></svg></button>
            <button aria-label="Close"><svg viewBox="0 0 14 14"><path d="M1 1l12 12M13 1L1 13" stroke="#777"/></svg></button>
        </header>
        <div class="wizard-body">
            <nav>
                <a href="#" class="active"><svg class="olive"><use href="#glass"/></svg><span>Diagnostics</span></a>
                <a href="#"><svg viewBox="0 0 24 24"><path d="M9 3l13-1v14l-4 1" fill="#d6e4f5" stroke="#7a9cc8"/><path d="M6 6l12-1v14l-4 1" fill="#d6e4f5" stroke="#7a9cc8"/><path d="M3 8l11 0v14l-11-2z" fill="#c9dcf3" stroke="#7a9cc8"/></svg><span>Combined Fix</span></a>
                <hr>
                <a href="#"><svg class="m-red"><use href="#mesh-cube"/></svg><span>Normals</span></a>
                <a href="#"><svg viewBox="0 0 24 24"><use href="#mesh-cube"/><path d="M11 9l8-4M13 5l3 3" stroke="#d8b820" stroke-width="2"/></svg><span>Stitching</span></a>
                <a href="#"><svg viewBox="0 0 24 24"><use href="#mesh-cube"/><path d="M5 8h3v2H5zM10 4h3v2h-3zM15 9h3v3h-3zM7 15h3v3H7zM16 16h3v3h-3zM18 5h3v2h-3zM3 12h2v2H3z" fill="#1b2350"/></svg><span>Noise Shells</span></a>
                <a href="#"><svg class="m-holes"><use href="#mesh-cube"/></svg><span>Holes</span></a>
                <a href="#"><svg viewBox="0 0 24 24"><path d="M2 5l11-4 9 3-2 15-7 4L3 18z" fill="#c3c6f2"/><path d="M2 5l11-4 9 3-2 15-7 4L3 18zM2 5l11 3 9-4M2 5l11 18L22 4M13 8v15" fill="none" stroke="#2b3390" stroke-width="1.300"/></svg><span>Triangles</span></a>
                <a href="#"><svg viewBox="0 0 24 24"><use href="#mesh-cube" x="1" y="0" width="18" height="19"/><use href="#mesh-cube" x="7" y="5" width="18" height="19"/></svg><span>Overlaps</span></a>
                <a href="#"><svg><use href="#mesh-cube"/></svg><span>Shells</span></a>
                <hr>
                <a href="#"><svg viewBox="0 0 24 24"><path d="M6 2h10l5 5v16H6z" fill="#e3f5fc" stroke="#2f7d9c" stroke-width="1.500"/><path d="M9 11h8M9 14h8M9 17h8" stroke="#234"/></svg><span>Profiles</span></a>
            </nav>
            <div class="wizard-main">
                <div class="part-row">
                    <label for="current-part">Current Part:</label>
                    <div class="select">
                        <select id="current-part"><option>Format stl</option></select>
                        <svg viewBox="0 0 10 6"><path d="M1 1l4 4 4-4" fill="none" stroke="#444"/></svg>
                    </div>
                    <button class="win" disabled>Next</button>
                </div>
                <div class="sheet">
                    <fieldset class="advice">
                        <legend>Advice</legend>
                        <p>No more errors are detected. It seems that the part is ok. Note that not all parameters were analysed.</p>
                        <div class="scroll"><svg viewBox="0 0 10 6"><path d="M1 5l4-4 4 4" fill="none" stroke="#aaa" stroke-width="1.500"/></svg><svg viewBox="0 0 10 6"><path d="M1 1l4 4 4-4" fill="none" stroke="#aaa" stroke-width="1.500"/></svg></div>
                    </fieldset>
                    <fieldset class="diagnostics">
                        <legend>Diagnostics</legend>
                        <label class="full"><input type="checkbox">Full Analysis</label>
                        <ul>
                            <li><input type="checkbox" id="d1" checked><svg><use href="#tick"/></svg><b>0</b><label for="d1">inverted normals detected</label></li>
                            <li><input type="checkbox" id="d2" checked><svg><use href="#tick"/></svg><b>0</b><label for="d2">bad edges detected</label></li>
                            <li class="sub"><span></span><svg><use href="#tick"/></svg><b>0</b><span>bad contours detected</span></li>
                            <li class="sub"><input type="checkbox" id="d3" checked><svg><use href="#tick"/></svg><b>0</b><label for="d3">near bad edges detected</label></li>
                            <li class="sub"><input type="checkbox" id="d4" checked><svg><use href="#tick"/></svg><b>0</b><label for="d4">planar holes detected</label></li>
                            <li><input type="checkbox" id="d5" checked><svg><use href="#tick"/></svg><b>1</b><label for="d5">shells detected</label></li>
                            <li class="sub"><span></span><svg><use href="#tick"/></svg><b>0</b><span>possible noise shells detected</span></li>
                            <li><input type="checkbox" id="d6"><i class="dot"></i><b></b><label for="d6">overlapping triangles detected</label></li>
                            <li><input type="checkbox" id="d7"><i class="dot"></i><b></b><label for="d7">intersecting triangles detected</label></li>
                        </ul>
                        <button class="win update"><svg><use href="#glass"/></svg><span>Update</span></button>
                    </fieldset>
                </div>
                <div class="actions">
                    <button class="win follow" disabled><svg viewBox="0 0 24 24"><path d="M2 9h11V4l9 8-9 8v-5H2z" fill="#a5d896" stroke="#6cb35c" stroke-width="1.500"/></svg><span>Follow Advice</span></button>
                    <button class="win">Close</button>
                    <button class="win">Help</button>
                </div>
            </div>
        </div>
        <svg class="resize" viewBox="0 0 16 16"><path d="M1 16L16 1M5 16L16 5M9 16l7-7M13 16l3-3" stroke="#777" stroke-width="1.500"/></svg>
    </div>

    <script>
        // ruler: one centimetre is a major tick, ten minor ticks in between
        const ruler = document.getElementById("ruler")
        const cm = 213.7
        let marks = ""
        for (let i = 0; i <= 68; i++) {
            const x = Math.round(i * cm / 10)
            const h = i % 10 === 0 ? 13 : (i % 5 === 0 ? 8 : 4)
            marks += `<path d="M${x + 0.5} 1v${h}"/>`
            if (i % 10 === 0) marks += `<text x="${Math.max(x - 1, 7)}" y="30">${i / 10}</text>`
        }
        ruler.innerHTML = marks + `<text x="1502" y="28" class="unit">cm</text>`
    </script>
</body>
</html>
```
FILE: styles.css
```css
:root {
    --blue: #2997fd;
    --sky: #badef9;
    --selected: #92c1ec;
    --line: #c8cccf;
    --ui-font: 'Noto Sans', 'Open Sans', sans-serif;
}

* {
    box-sizing: border-box;
}

body {
    margin: 0;
    height: 100vh;
    display: flex;
    flex-direction: column;
    overflow: hidden;
    background: #fefefe;
    color: #333;
    font: 12px/17px var(--ui-font);
}

h1, h2, p, ul, fieldset {
    margin: 0;
    padding: 0;
    font-size: inherit;
    font-weight: normal;
}

button {
    padding: 0;
    border: 0;
    background: none;
    color: inherit;
    font: inherit;
}
button:disabled {
    color: #a3a3a3;
}
svg {
    flex: none;
}
.defs {
    position: absolute;
}
.sep {
    width: 1px;
    background: #d5d5d5;
}
.caret {
    width: 8px;
    height: 5px;
    color: #777;
}
.caret.blue { color: #33658e; }
.caret.light { color: #bbb; }

/* icon colours */
.c-gray { --l: #c4c4c4; --r: #8f8f8f; --t: #a9a9a9; --w: #a0a0a0; }
.c-blue { --l: #2e8edb; --r: #1b6cb5; --t: #6cb4ec; }
.c-top { --t: #2e8edb; }
.c-right { --r: #2e8edb; }
.c-dark { --l: #777; --r: #b5b5b5; --t: #333; color: #777; }
.c-multi { --l: #2e8edb; --r: #8cc04a; --t: #f5a11c; }
.c-line { color: #4aa3e8; }
.c-risk { --l: #a8b83c; --r: #d9403a; --t: #f5b52c; }
.c-gold { --l: #c0b83c; --r: #e8a03a; --t: #f5b52c; }
.c-red { --l: #c0392b; --r: #a93226; --t: #e74c3c; }
.t-gray { --f: #bdbdbd; --s: #999; }
.t-light { --f: #ccc; --s: #888; }
.t-white { --f: #fff; --s: #aaa; }
.t-dark { --f: #b0b0b0; --s: #444; }
.m-red { --r: #c5161c; }
.m-holes { --t: #b3121a; }
.olive { --h: #7c8a6a; }
.faded { opacity: .5; --h: #999; }

/* title bar */
#titlebar {
    display: flex;
    align-items: center;
    height: 39px;
    padding-left: 4px;
}
.quick {
    display: flex;
    align-items: center;
    width: 587px;
    padding-bottom: 6px;
}
.quick button {
    display: flex;
    align-items: center;
    justify-content: center;
    width: 27px;
    height: 26px;
}
.quick button.wide {
    width: 38px;
    gap: 6px;
}
.quick button > svg:first-child {
    width: 20px;
    height: 20px;
}
.quick .caret {
    width: 6px;
}
.quick button.on {
    background: var(--selected);
}
.quick .sep {
    height: 26px;
    margin: 0 3px;
}
.quick input {
    flex: 1;
    height: 24px;
    margin-left: 2px;
    padding: 0 2px;
    border: 1px solid #999;
    font: 13px 'Open Sans', sans-serif;
}
.quick input::placeholder {
    color: #666;
}
.overflow {
    width: 7px;
    height: 9px;
    margin-left: 3px;
}
#titlebar h1 {
    flex: 1;
    padding-right: 10px;
    text-align: center;
    font: 13px/20px 'Open Sans', sans-serif;
}
.window-buttons {
    display: flex;
    gap: 32px;
    width: 122px;
    padding-bottom: 6px;
}
.window-buttons svg {
    display: block;
    width: 14px;
    height: 14px;
}

/* ribbon tabs */
#tabs {
    display: flex;
    gap: 1px;
    height: 30px;
    padding-left: 1px;
    border-bottom: 1px solid var(--line);
}
#tabs a {
    padding: 8px 13px 0;
    color: #222;
    text-decoration: none;
}
#tabs a.file {
    width: 58px;
    margin-right: 2px;
    padding-top: 7px;
    background: var(--blue);
    color: #fff;
    text-align: center;
}
#tabs a.active {
    margin: 0 3px -1px;
    padding: 7px 18px 0;
    border: 1px solid var(--line);
    border-bottom: 0;
    background: #fefefe;
    color: #2678a6;
}
#tabs button {
    margin-left: auto;
    padding-right: 8px;
}
#tabs button svg {
    width: 9px;
    height: 9px;
}

/* ribbon */
#ribbon {
    display: flex;
    height: 104px;
    margin-bottom: 1px;
    border-bottom: 1px solid var(--line);
}
.group {
    display: flex;
    flex-direction: column;
    justify-content: space-between;
    margin: 2px 0;
    border-right: 1px solid #d5d5d5;
}
.group h2 {
    text-align: center;
    line-height: 23px;
}
.big-buttons {
    display: grid;
    grid-template-columns: 70px 68px 83px 82px 106px 60px 96px;
    padding: 4px 0 0 5px;
}
.big-buttons button {
    text-align: center;
    white-space: nowrap;
}
.big-buttons svg {
    display: block;
    width: 32px;
    height: 34px;
    margin: 0 auto 3px;
    color: #444;
}
.big-buttons button:disabled svg {
    color: #999;
}
.small-buttons {
    display: grid;
    grid-template-rows: repeat(3, 25px);
    grid-auto-flow: column;
    justify-items: start;
    padding: 3px 0 0 8px;
}
.small-buttons button {
    display: flex;
    align-items: center;
    gap: 4px;
    white-space: nowrap;
}
.small-buttons button.on {
    background: var(--selected);
    margin-left: -3px;
    padding: 0 6px 0 3px;
}
.small-buttons button > svg:first-child {
    width: 20px;
    height: 20px;
}
.analyze { width: 571px; }
.estimate { width: 353px; }
.estimate .small-buttons { grid-template-columns: 176px auto; }
.measure { width: 600px; }
.measure .small-buttons { grid-template-columns: 179px 249px auto; }
.pmi { width: 143px; }
.report { width: 182px; }

/* workspace */
#workspace {
    display: flex;
    flex: 1;
    min-height: 0;
}
#viewport {
    display: flex;
    flex: 1;
    flex-direction: column;
    min-width: 0;
    background: var(--sky);
}
#scene {
    flex: 1;
    min-height: 0;
    width: 100%;
}
#ruler {
    width: 100%;
    border-top: 1px solid #44607a;
    background: linear-gradient(#edf6fd, #b9dcf8);
}
#ruler path {
    stroke: #333;
}
#ruler text {
    font: 16px 'Liberation Sans', sans-serif;
    text-anchor: middle;
    fill: #111;
}
#ruler .unit {
    font-weight: bold;
    font-size: 15px;
}
.dims rect {
    fill: #fff;
    stroke: #111;
}
.dims text {
    font: 17px 'Liberation Sans', sans-serif;
}
.wcs {
    font: 14px 'Liberation Sans', sans-serif;
    fill: #1d4468;
}
.axis {
    font: 15px 'Liberation Sans', sans-serif;
    fill: #d5161c;
}
.axis-x {
    font: 17px 'Liberation Sans', sans-serif;
    fill: #a01020;
}
.face {
    font: bold 9px 'Liberation Sans', sans-serif;
    fill: #666;
}
.face.big { font-size: 11px; }
.face.top { font-size: 8px; }

/* docked panes */
#panes {
    width: 395px;
}
#panes section {
    height: 57px;
    border-bottom: 1px solid #999;
    border-right: 1px solid #ddd;
}
#panes header {
    display: flex;
    align-items: center;
    gap: 12px;
    height: 30px;
    padding-right: 11px;
}
#panes header i {
    flex: 1;
    height: 5px;
    background: radial-gradient(circle, #555 30%, transparent 40%) 0 0 / 3px 3px;
}
#panes header button {
    width: 8px;
    color: #111;
    font: bold 15px 'Liberation Sans', sans-serif;
}
.pane-tabs {
    display: flex;
    align-items: center;
    justify-content: flex-end;
    height: 26px;
    color: #222;
}
.pane-tabs button {
    width: 19px;
    height: 25px;
    border: 1px solid #aaa;
    border-right: 0;
    color: #111;
    font: 14px 'DejaVu Sans', sans-serif;
}
.pane-tabs span + button {
    margin-left: 3px;
    color: #999;
}
.pane-tabs .short {
    margin-right: 22px;
}
.pane-tabs .cut {
    margin-right: 30px;
}
.pane-tabs .cut-next + button {
    margin-left: 0;
}

/* bottom toolbar */
#toolbar {
    display: flex;
    align-items: center;
    height: 34px;
    padding-left: 4px;
    color: #444;
}
#toolbar button {
    width: 31px;
    height: 30px;
    padding: 3px 3px;
}
#toolbar button svg {
    display: block;
    width: 24px;
    height: 24px;
}
#toolbar .grip {
    width: 3px;
    height: 22px;
    margin-right: 5px;
    border-left: 2px dotted #333;
}
#toolbar .caret {
    margin: 0 2px;
}
#toolbar .sep {
    height: 24px;
    margin: 0 3px;
}
#toolbar .on {
    width: 29px;
    background: #9cc8ee;
}
#toolbar .drop {
    display: flex;
    align-items: center;
    justify-content: center;
    width: 15px;
    height: 30px;
    background: #d3e7f8;
}

#status {
    height: 23px;
    padding: 3px 6px;
    background: linear-gradient(to right, #0b4a86 60px, #9fd0fb 60px 490px, #0b4a86 490px) bottom / 100% 2px no-repeat var(--blue);
    color: #123a66;
    font-size: 13px;
}

/* fix wizard */
#wizard {
    position: absolute;
    top: 133px;
    left: 1045px;
    display: flex;
    flex-direction: column;
    width: 770px;
    height: 711px;
    border: 1px solid #999;
    background: #f0f0f0;
    box-shadow: 2px 3px 12px rgba(0, 0, 0, .4);
    color: #222;
}
#wizard > header {
    display: flex;
    align-items: center;
    height: 37px;
    padding: 0 22px 0 10px;
    background: #fff;
    color: #999;
}
#wizard > header > svg {
    width: 18px;
    height: 18px;
    margin-right: 6px;
}
#wizard > header h2 {
    flex: 1;
    font-size: 14px;
}
#wizard > header button {
    width: 14px;
    height: 14px;
    margin-left: 44px;
}
#wizard > header button svg {
    display: block;
}
.wizard-body {
    display: flex;
    flex: 1;
    gap: 9px;
    padding: 5px 9px 4px 5px;
}
.wizard-body nav {
    width: 152px;
    padding: 3px 8px 0 2px;
    border: 1px solid #777;
    background: #fff;
    font-size: 14px;
}
.wizard-body nav a {
    display: flex;
    align-items: center;
    height: 24px;
    color: #222;
    text-decoration: none;
}
.wizard-body nav svg {
    width: 20px;
    height: 20px;
    margin: 0 2px;
}
.wizard-body nav span {
    flex: 1;
    padding: 2px;
    line-height: 20px;
}
.wizard-body nav .active span {
    background: #f0f0f0;
}
.wizard-body nav hr {
    height: 1px;
    margin: 11px 0 12px;
    border: 0;
    background: #555;
}
.wizard-main {
    display: flex;
    flex: 1;
    flex-direction: column;
}
.part-row {
    display: flex;
    align-items: flex-start;
    height: 40px;
    padding-left: 7px;
}
.part-row label {
    width: 92px;
}
.select {
    position: relative;
    flex: 1;
}
.select select {
    appearance: none;
    display: block;
    width: 100%;
    height: 25px;
    padding: 0 3px;
    border: 1px solid #999;
    border-radius: 0;
    background: #e1e1e1;
    color: #222;
    font: inherit;
}
.select svg {
    position: absolute;
    top: 9px;
    right: 5px;
    width: 10px;
    height: 6px;
}
.win {
    display: flex;
    align-items: center;
    justify-content: center;
    width: 73px;
    height: 31px;
    border: 1px solid #adadad;
    background: #e1e1e1;
    color: #222;
}
.win:disabled {
    border-color: #bfbfbf;
    background: #ccc;
    color: #8c8c8c;
}
.win svg {
    width: 22px;
    height: 22px;
    margin-left: 2px;
}
.win span {
    flex: 1;
    padding-right: 6px;
    text-align: center;
}
.part-row .win {
    width: 57px;
    height: 29px;
    margin: 1px -4px 0 5px;
}
.sheet {
    height: 481px;
    padding: 26px 12px 0;
    border: 1px solid #aaa;
    border-radius: 3px;
    background: linear-gradient(#fff, #f0f0f0);
}
fieldset {
    min-width: 0;
    border: 1px solid #dcdcdc;
}
legend {
    padding: 0 3px;
}
.advice {
    display: flex;
    justify-content: space-between;
    height: 94px;
    margin-bottom: 6px;
    padding: 9px 12px 9px 15px;
}
.advice legend {
    margin-left: -10px;
}
.advice p {
    width: 508px;
}
.scroll {
    display: flex;
    flex-direction: column;
    justify-content: space-between;
    align-items: center;
    width: 20px;
    height: 57px;
    padding: 8px 0;
    background: #f0f0f0;
}
.scroll svg {
    width: 10px;
    height: 6px;
}
.diagnostics {
    height: 340px;
    padding: 11px 12px 0;
}
.diagnostics legend {
    margin-left: -7px;
}
.diagnostics input {
    appearance: none;
    position: relative;
    width: 16px;
    height: 16px;
    margin: 0;
    border: 1px solid #333;
    background: #fff;
}
.diagnostics input:checked::after {
    content: "";
    position: absolute;
    top: 1px;
    left: 4px;
    width: 6px;
    height: 9px;
    border: solid #444;
    border-width: 0 1px 1px 0;
    transform: rotate(40deg);
}
.full {
    display: flex;
    align-items: center;
    gap: 3px;
    margin-bottom: 15px;
}
.diagnostics ul {
    list-style: none;
    padding-left: 25px;
}
.diagnostics li {
    display: grid;
    grid-template-columns: 25px 25px 56px 1fr;
    align-items: center;
    height: 25px;
}
.diagnostics li.sub {
    padding-left: 25px;
}
.diagnostics li svg {
    width: 18px;
    height: 18px;
}
.dot {
    width: 4px;
    height: 4px;
    margin-left: 6px;
    border-radius: 50%;
    background: #3434b4;
}
.win.update {
    width: 140px;
    height: 31px;
    margin: 13px 0 0 auto;
}
.actions {
    display: flex;
    justify-content: flex-end;
    gap: 8px;
    margin: auto 15px 0 0;
}
.win.follow {
    width: 189px;
    color: #999;
    text-shadow: 1px 1px #fff;
}
.resize {
    position: absolute;
    right: 0;
    bottom: 0;
    width: 15px;
    height: 15px;
}
```
